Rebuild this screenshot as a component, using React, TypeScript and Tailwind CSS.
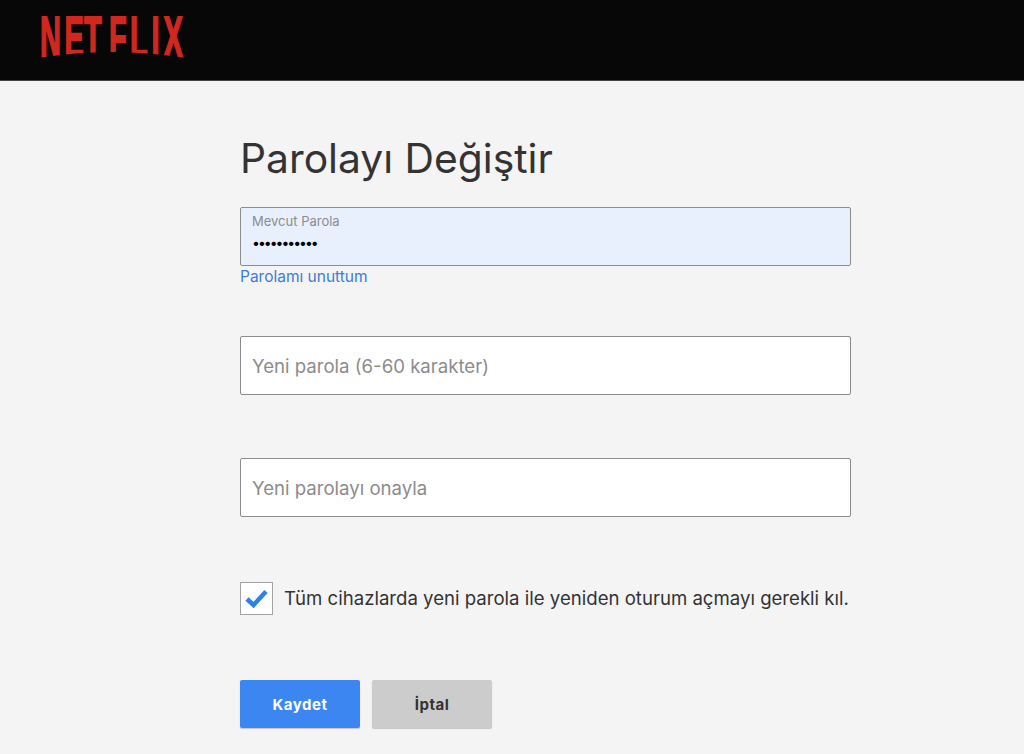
// letter left edges in the picture
const logoX = [40, 64.5, 84, 109, 130, 151.5, 163.5];
const sx = 0.58;
const sy = 1.14;

function Logo() {
  return (
    <svg width="200" height="81" viewBox="0 0 200 81" className="block">
      <defs>
        {/* the wordmark sags in the middle: flat top, curved bottom */}
        <clipPath id="logo-arc">
          <path d="M38 16 H186 V58 Q112 46 38 58 Z" />
        </clipPath>
      </defs>
      <g clipPath="url(#logo-arc)">
        <text
          x={logoX.map((x) => x / sx).join(" ")}
          y={57 / sy}
          transform={`scale(${sx} ${sy})`}
          fontFamily="'Liberation Sans', sans-serif"
          fontWeight="700"
          fontSize="50"
          fill="#d0281f"
          stroke="#d0281f"
          strokeWidth="1.5"
          vectorEffect="non-scaling-stroke"
        >
          NETFLIX
        </text>
      </g>
    </svg>
  );
}

function Field({ placeholder }: { placeholder: string }) {
  return (
    <div className="h-[59px] rounded-[2px] border border-[#8c8c8c] bg-white px-[11px] pt-[2px] flex items-center text-[18.6px] text-[#8c8c8c]">
      {placeholder}
    </div>
  );
}

export default function App() {
  return (
    <div className="h-[754px] overflow-hidden bg-[#f4f4f5] font-['Inter','Liberation_Sans',sans-serif]">
      <header className="h-[81px] bg-[#070707] border-b border-[#444]">
        <Logo />
      </header>

      <main className="ml-[240px] w-[611px]">
        <h1 className="mt-[52px] h-[54px] text-[40.8px] leading-[50px] font-normal text-[#333]">Parolayı Değiştir</h1>

        <div className="mt-[20px] h-[59px] rounded-[2px] border border-[#8c8c8c] bg-[#e8f0fe] px-[11px]">
          <div className="pt-[5px] text-[13px] leading-[16px] text-[#8c8c8c]">Mevcut Parola</div>
          <div className="mt-[4px] text-[14px] leading-[20px] tracking-[-2px] text-black">•••••••••••</div>
        </div>
        <a className="block mt-[1px] text-[15.5px] leading-[20px] text-[#3b7dd8]">Parolamı unuttum</a>

        <div className="mt-[49px]">
          <Field placeholder="Yeni parola (6-60 karakter)" />
        </div>
        <div className="mt-[63px]">
          <Field placeholder="Yeni parolayı onayla" />
        </div>

        <div className="mt-[65px] flex items-center gap-[11px] whitespace-nowrap">
          <span className="flex h-[33px] w-[33px] shrink-0 items-center justify-center border border-[#a3a3a3] bg-white">
            <svg width="25" height="21" viewBox="0 0 25 21" fill="none">
              <path d="M3 11 L9.5 17 L22 3.5" stroke="#2f7fe6" strokeWidth="4.5" />
            </svg>
          </span>
          <span className="text-[18.6px] text-[#333]">Tüm cihazlarda yeni parola ile yeniden oturum açmayı gerekli kıl.</span>
        </div>

        <div className="mt-[65px] flex gap-[12px]">
          <button className="h-[48px] w-[120px] rounded-[2px] bg-[#3b86f0] pt-[2px] text-[15px] font-bold tracking-[0.5px] text-white shadow-[0_1px_1px_rgba(0,0,0,0.2)]">
            Kaydet
          </button>
          <button className="h-[48px] w-[120px] rounded-[2px] bg-[#cdcccd] pt-[2px] text-[15px] font-bold tracking-[0.5px] text-[#333] shadow-[0_1px_1px_rgba(0,0,0,0.2)]">
            İptal
          </button>
        </div>
      </main>
    </div>
  );
}
